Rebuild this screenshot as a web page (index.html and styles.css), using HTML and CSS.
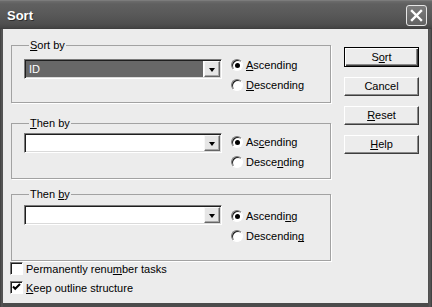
FILE: index.html
```html
<!DOCTYPE html>
<html lang="en">
<head>
  <meta charset="UTF-8" />
  <title>Sort</title>
  <link rel="stylesheet" href="styles.css">
</head>
<body>
  <div class="window">
    <div class="titlebar">
      <span class="title">Sort</span>
      <span class="close">
        <svg width="19" height="19" viewBox="0 0 19 19">
          <path d="M5 5L14 14M14 5L5 14" stroke="#fff" stroke-width="2.4" stroke-linecap="square" />
        </svg>
      </span>
    </div>

    <div class="client">
      <div class="main">
        <div class="groups">
          <fieldset class="group group-1">
            <legend><u>S</u>ort by</legend>
            <div class="row">
              <div class="combo">
                <span class="value selected">ID</span>
                <span class="drop"></span>
              </div>
              <div class="radios">
                <div class="radio"><span class="mark checked"></span><span><u>A</u>scending</span></div>
                <div class="radio"><span class="mark"></span><span><u>D</u>escending</span></div>
              </div>
            </div>
          </fieldset>

          <fieldset class="group group-2">
            <legend><u>T</u>hen by</legend>
            <div class="row">
              <div class="combo">
                <span class="value"></span>
                <span class="drop"></span>
              </div>
              <div class="radios">
                <div class="radio"><span class="mark checked"></span><span>As<u>c</u>ending</span></div>
                <div class="radio"><span class="mark"></span><span>Desce<u>n</u>ding</span></div>
              </div>
            </div>
          </fieldset>

          <fieldset class="group group-3">
            <legend>Then <u>b</u>y</legend>
            <div class="row">
              <div class="combo">
                <span class="value"></span>
                <span class="drop"></span>
              </div>
              <div class="radios">
                <div class="radio"><span class="mark checked"></span><span>Ascendi<u>n</u>g</span></div>
                <div class="radio"><span class="mark"></span><span>Descendin<u>g</u></span></div>
              </div>
            </div>
          </fieldset>
        </div>

        <div class="buttons">
          <div class="btn default">S<u>o</u>rt</div>
          <div class="btn">Cancel</div>
          <div class="btn"><u>R</u>eset</div>
          <div class="btn"><u>H</u>elp</div>
        </div>
      </div>

      <div class="checks">
        <div class="check"><span class="box"></span><span>Permanently renu<u>m</u>ber tasks</span></div>
        <div class="check">
          <span class="box">
            <svg width="11" height="11" viewBox="0 0 11 11">
              <path d="M2 4.5L4.2 6.8L9 2" fill="none" stroke="#000" stroke-width="2" />
            </svg>
          </span>
          <span><u>K</u>eep outline structure</span>
        </div>
      </div>
    </div>
  </div>
</body>
</html>
```

FILE: styles.css
```css
* { box-sizing: border-box; }

body {
  margin: 0;
  font-family: "Liberation Sans", Arial, sans-serif;
  font-size: 11px;
  color: #000;
  background: #4a4a4a;
}

u {
  text-decoration-skip-ink: none;
}

.window {
  width: 432px;
  height: 307px;
  display: flex;
  flex-direction: column;
  background: linear-gradient(90deg, #3e3e3e 0, #5a5a5a 2px, #4c4c4c 3px, #4c4c4c 428px, #5a5a5a 430px, #3a3a3a 432px);
}

/* title bar */
.titlebar {
  height: 29px;
  display: flex;
  align-items: center;
  justify-content: space-between;
  padding: 0 5px 0 7px;
  background: linear-gradient(#8a8a8a 0, #6c6c6c 1px, #606060 4px, #595959 14px, #4f4f4f 24px, #444 28px, #3a3a3a 29px);
}

.title {
  color: #fff;
  font-weight: bold;
  font-size: 13px;
  text-shadow: 1px 1px 0 #2e2e2e;
  margin-top: 2px;
}

.close {
  width: 21px;
  height: 21px;
  border: 1px solid #e6e6e6;
  border-radius: 3px;
  background: linear-gradient(#7c7c7c, #626262);
  display: flex;
  margin-top: 1px;
}

/* client area */
.client {
  flex: 1;
  margin: 0 4px 4px 3px;
  padding: 10px 0 0 8px;
  background: #ececec;
  display: flex;
  flex-direction: column;
}

.main {
  display: flex;
}

.groups {
  width: 320px;
  display: flex;
  flex-direction: column;
}

.group {
  margin: 0;
  padding: 0 0 0 12px;
  min-width: 0;
  border: 1px solid #a2a2a2;
  box-shadow: 1px 1px 0 #fff;
}

.group legend {
  margin-left: 5px;
  padding: 0 1px;
  line-height: 13px;
}

.group-1 { padding-top: 7px; padding-bottom: 7px; }
.group-2 { margin-top: 14px; padding-top: 3px; padding-bottom: 6px; }
.group-3 { margin-top: 9px; padding-top: 4px; padding-bottom: 14px; }

.row {
  display: flex;
  align-items: flex-start;
}

.combo {
  width: 198px;
  height: 20px;
  display: flex;
  padding: 1px;
  background: #fff;
  border: 1px solid;
  border-color: #7a7a7a #fff #fff #7a7a7a;
  box-shadow: inset 1px 1px 0 #1e1e1e, inset -1px -1px 0 #dadada;
}

.value {
  flex: 1;
  height: 16px;
  line-height: 16px;
  padding-left: 3px;
  margin-right: 1px;
}

.value.selected {
  background: #676767;
  color: #fff;
}

.drop {
  width: 16px;
  height: 16px;
  background: #e6e6e6;
  border: 1px solid;
  border-color: #f8f8f8 #666 #666 #f8f8f8;
  box-shadow: inset -1px -1px 0 #a6a6a6;
  display: flex;
  align-items: center;
  justify-content: center;
}

.drop::after {
  content: "";
  border-top: 4px solid #000;
  border-left: 3.5px solid transparent;
  border-right: 3.5px solid transparent;
  margin: 1px 1px 0 0;
}

.radios {
  margin-left: 9px;
  display: flex;
  flex-direction: column;
}

.group-1 .radios { margin-top: -4px; }
.group-2 .radios { margin-top: -1px; }
.group-3 .radios { margin-top: 1px; }

.radio {
  height: 20px;
  display: flex;
  align-items: center;
  gap: 3px;
}

.mark {
  width: 12px;
  height: 12px;
  border-radius: 50%;
  background: #fff;
  border: 1px solid;
  border-color: #7a7a7a #fff #fff #7a7a7a;
  box-shadow: inset 1px 1px 0 #1e1e1e;
  display: grid;
  place-items: center;
}

.mark.checked::after {
  content: "";
  width: 5px;
  height: 5px;
  border-radius: 50%;
  background: #000;
}

/* buttons */
.buttons {
  margin: 8px 0 0 13px;
  display: flex;
  flex-direction: column;
  gap: 10px;
}

.btn {
  width: 75px;
  height: 19px;
  line-height: 17px;
  text-align: center;
  background: #ececec;
  border: 1px solid;
  border-color: #fff #3e3e3e #3e3e3e #fff;
  box-shadow: inset -1px -1px 0 #8a8a8a;
}

.btn.default {
  height: 20px;
  line-height: 18px;
  border-color: #000;
  box-shadow: inset 1px 1px 0 #fff, inset -1px -1px 0 #3e3e3e, inset -2px -2px 0 #8a8a8a;
}

/* check boxes */
.checks {
  margin: -2px 0 0 -1px;
  display: flex;
  flex-direction: column;
}

.check {
  height: 19px;
  display: flex;
  align-items: center;
  gap: 3px;
}

.box {
  width: 13px;
  height: 13px;
  background: #fff;
  border: 1px solid;
  border-color: #7a7a7a #fff #fff #7a7a7a;
  box-shadow: inset 1px 1px 0 #1e1e1e;
  display: flex;
  align-items: center;
  justify-content: center;
}
```
